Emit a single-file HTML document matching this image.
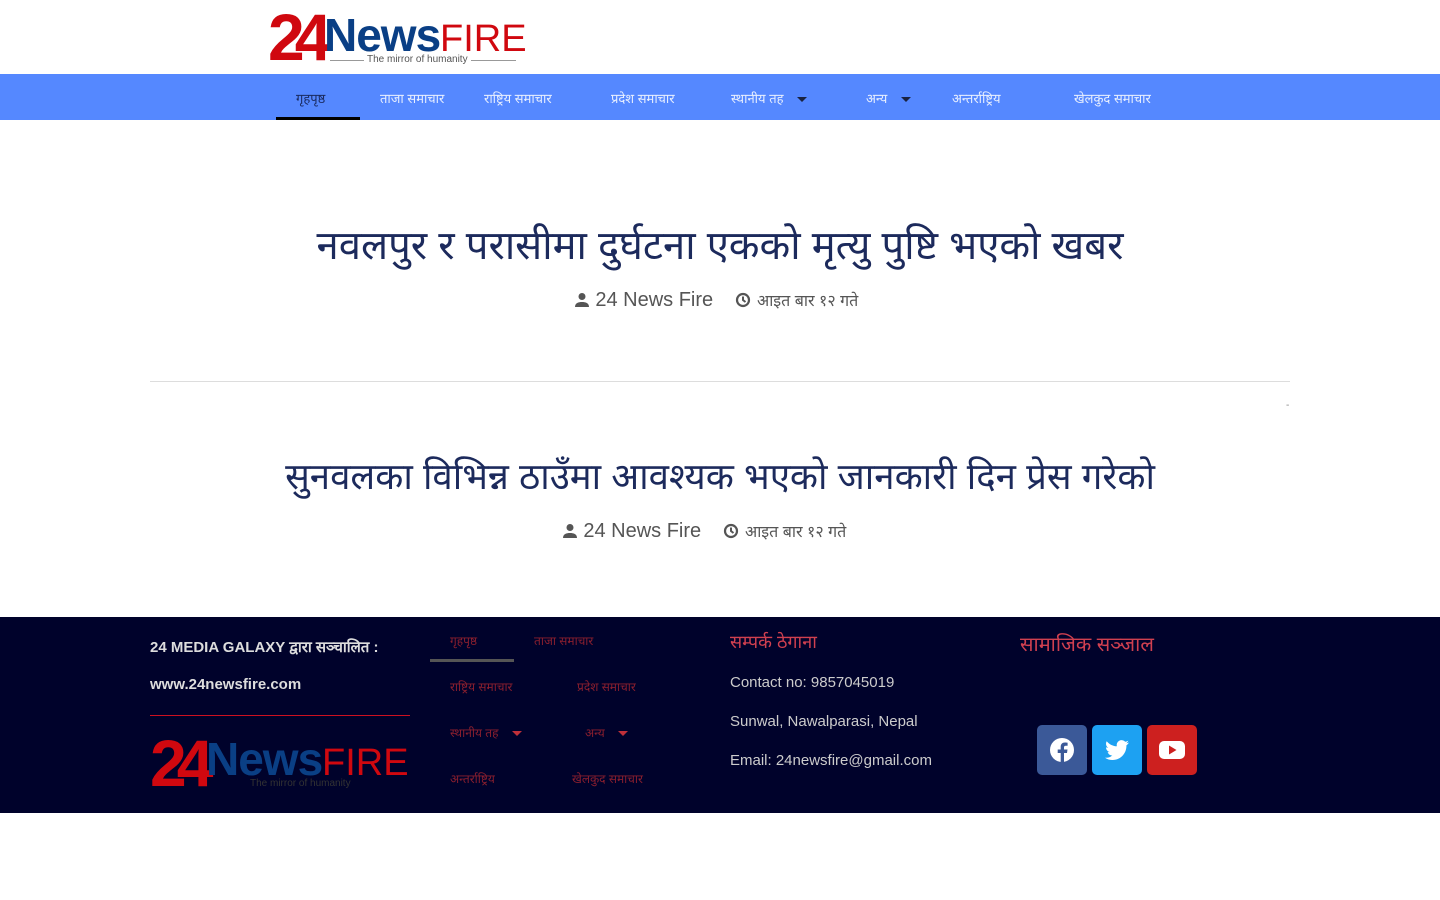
<!DOCTYPE html>
<html><head><meta charset="utf-8"><style>
*{margin:0;padding:0;box-sizing:border-box}
body{width:1440px;height:900px;background:#fff;font-family:"Liberation Sans",sans-serif;position:relative;overflow:hidden}
.abs{position:absolute}
.nav{top:74px;left:0;width:1440px;height:46px;background:#5588ff}
.nav span{position:absolute;top:15px;font-size:13px;color:#e8efff;white-space:nowrap}
.tri{display:inline-block;width:0;height:0;border-left:5px solid transparent;border-right:5px solid transparent;border-top:5px solid #1a2240;margin-left:10px;vertical-align:middle}
.h{left:0;width:1440px;text-align:center;color:#1c2a5c;white-space:nowrap}
.meta{left:0;width:1440px;text-align:center;font-size:20px;color:#555;white-space:nowrap}
.meta svg{vertical-align:-2px}
.foot{top:617px;left:0;width:1440px;height:196px;background:#00022b}
.fm{position:absolute;font-size:12px;color:#8a1f2e;white-space:nowrap}
.ft{color:#ccc;font-size:15px;position:absolute}
.soc{position:absolute;top:725px;width:50px;height:50px;border-radius:5px}
.lg24{position:absolute;left:0;top:2px;font-size:66px;font-weight:bold;color:#d0080f;letter-spacing:-10px;line-height:66px}
</style></head><body>
<div class="abs" style="left:268px;top:2px;width:260px;height:72px">
 <div class="lg24">24</div>
 <div class="abs" style="left:56px;top:8px;font-size:46px;font-weight:bold;color:#0a3f85;line-height:50px;letter-spacing:-1px">News</div>
 <div class="abs" style="left:172px;top:14px;font-size:38px;color:#d0080f;line-height:46px">FIRE</div>
 <div class="abs" style="left:62px;top:58px;width:186px;border-top:1px solid #999"></div>
 <div class="abs" style="left:96px;top:52px;background:#fff;padding:0 3px;font-size:10px;color:#555">The mirror of humanity</div>
</div>
<div class="abs nav">
 <div class="abs" style="left:276px;top:43px;width:84px;height:3px;background:#000"></div>
 <span style="left:296px;color:#1a2a60">गृहपृष्ठ</span>
 <span style="left:380px">ताजा समाचार</span>
 <span style="left:484px">राष्ट्रिय समाचार</span>
 <span style="left:611px">प्रदेश समाचार</span>
 <span style="left:731px">स्थानीय तह <i class="tri"></i></span>
 <span style="left:866px">अन्य <i class="tri"></i></span>
 <span style="left:952px">अन्तर्राष्ट्रिय</span>
 <span style="left:1074px">खेलकुद समाचार</span>
</div>
<div class="abs h" style="top:216px;font-size:40px">नवलपुर र परासीमा दुर्घटना एकको मृत्यु पुष्टि भएको खबर</div>
<div class="abs meta" style="top:289px;left:-4px"><svg width="16" height="16" viewBox="0 0 16 16"><circle cx="8" cy="4.5" r="3.5" fill="#555"/><path d="M1 15c0-4 3.5-5 7-5s7 1 7 5z" fill="#555"/></svg> 24 News Fire &nbsp;&nbsp; <svg width="16" height="16" viewBox="0 0 16 16"><circle cx="8" cy="8" r="6" fill="none" stroke="#555" stroke-width="2.2"/><path d="M8 4.5V8l2.5 2" stroke="#555" stroke-width="2" fill="none"/></svg> <span style="font-size:16px">आइत बार १२ गते</span></div>
<div class="abs" style="left:150px;top:381px;width:1140px;border-top:1px solid #ddd"></div>
<div class="abs" style="left:1286px;top:400px;font-size:10px;color:#888">-</div>
<div class="abs h" style="top:450px;font-size:36.6px">सुनवलका विभिन्न ठाउँमा आवश्यक भएको जानकारी दिन प्रेस गरेको</div>
<div class="abs meta" style="top:520px;left:-16px"><svg width="16" height="16" viewBox="0 0 16 16"><circle cx="8" cy="4.5" r="3.5" fill="#555"/><path d="M1 15c0-4 3.5-5 7-5s7 1 7 5z" fill="#555"/></svg> 24 News Fire &nbsp;&nbsp; <svg width="16" height="16" viewBox="0 0 16 16"><circle cx="8" cy="8" r="6" fill="none" stroke="#555" stroke-width="2.2"/><path d="M8 4.5V8l2.5 2" stroke="#555" stroke-width="2" fill="none"/></svg> <span style="font-size:16px">आइत बार १२ गते</span></div>
<div class="abs foot"></div>
<div class="ft" style="left:150px;top:637px;font-weight:bold;color:#ddd">24 MEDIA GALAXY द्वारा सञ्चालित :</div>
<div class="ft" style="left:150px;top:676px;font-weight:bold;color:#ddd">www.24newsfire.com</div>
<div class="abs" style="left:150px;top:715px;width:260px;border-top:1px solid #cc1020"></div>
<div class="abs" style="left:150px;top:724px;width:260px;height:74px">
 <div class="lg24" style="top:6px">24</div>
 <div class="abs" style="left:56px;top:10px;font-size:46px;font-weight:bold;color:#0a3f85;line-height:50px;letter-spacing:-1px">News</div>
 <div class="abs" style="left:172px;top:16px;font-size:38px;color:#d0080f;line-height:46px">FIRE</div>
 <div class="abs" style="left:100px;top:54px;font-size:10px;color:#333">The mirror of humanity</div>
</div>
<div class="abs" style="left:430px;top:659px;width:84px;height:3px;background:#555"></div>
<div class="fm" style="left:450px;top:632px">गृहपृष्ठ</div>
<div class="fm" style="left:534px;top:632px">ताजा समाचार</div>
<div class="fm" style="left:450px;top:678px">राष्ट्रिय समाचार</div>
<div class="fm" style="left:577px;top:678px">प्रदेश समाचार</div>
<div class="fm" style="left:450px;top:724px">स्थानीय तह <i class="tri" style="border-top-color:#c0303a"></i></div>
<div class="fm" style="left:585px;top:724px">अन्य <i class="tri" style="border-top-color:#c0303a"></i></div>
<div class="fm" style="left:450px;top:770px">अन्तर्राष्ट्रिय</div>
<div class="fm" style="left:572px;top:770px">खेलकुद समाचार</div>
<div class="abs" style="left:730px;top:630px;font-size:18px;color:#d04050">सम्पर्क ठेगाना</div>
<div class="ft" style="left:730px;top:674px">Contact no: 9857045019</div>
<div class="ft" style="left:730px;top:713px">Sunwal, Nawalparasi, Nepal</div>
<div class="ft" style="left:730px;top:752px">Email: 24newsfire@gmail.com</div>
<div class="abs" style="left:1020px;top:630px;font-size:20px;color:#d04050">सामाजिक सञ्जाल</div>
<div class="soc" style="left:1037px;background:#3b5998"><svg width="50" height="50" viewBox="0 0 50 50"><circle cx="25" cy="25" r="12" fill="#fff"/><path d="M27 37V28h3l.5-3.5H27v-2c0-1 .4-1.7 1.8-1.7h1.8v-3.1c-.4 0-1.5-.2-2.7-.2-2.6 0-4.2 1.5-4.2 4.3v2.7h-3V28h3v9z" fill="#3b5998"/></svg></div>
<div class="soc" style="left:1092px;background:#1da1f2"><svg width="50" height="50" viewBox="0 0 50 50"><path d="M37 17.5c-.9.4-1.8.6-2.8.8 1-.6 1.8-1.6 2.1-2.7-.9.6-2 1-3.1 1.2a4.9 4.9 0 0 0-8.4 4.5c-4.1-.2-7.7-2.2-10.1-5.1-1.3 2.3-.6 5.2 1.5 6.6-.8 0-1.6-.3-2.2-.6 0 2.4 1.7 4.4 3.9 4.8-.7.2-1.5.2-2.2.1.6 2 2.5 3.4 4.6 3.4A9.9 9.9 0 0 1 13 32.7 14 14 0 0 0 20.5 35c9.1 0 14.2-7.7 13.9-14.6.9-.7 1.8-1.6 2.6-2.9z" fill="#fff"/></svg></div>
<div class="soc" style="left:1147px;background:#cd201f"><svg width="50" height="50" viewBox="0 0 50 50"><rect x="12" y="16" width="26" height="18" rx="5" fill="#fff"/><path d="M22 20.5v9l7.5-4.5z" fill="#cd201f"/></svg></div>
</body></html>
